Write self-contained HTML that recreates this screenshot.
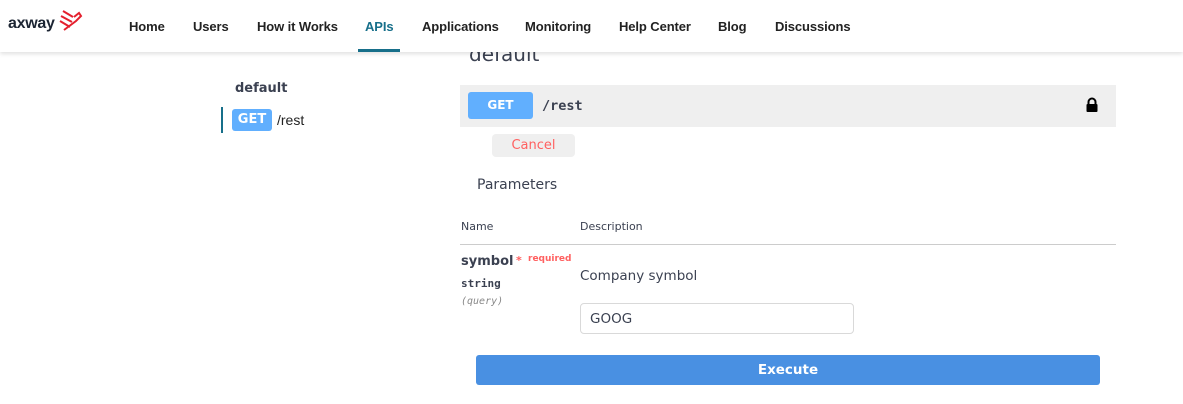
<!DOCTYPE html>
<html><head><meta charset="utf-8"><style>
*{margin:0;padding:0;box-sizing:border-box}
body{width:1183px;height:404px;background:#fff;position:relative;overflow:hidden;font-family:"DejaVu Sans",sans-serif;color:#3b4151}
.a{position:absolute;white-space:nowrap}
.hdr{position:absolute;left:0;top:0;width:1183px;height:52px;background:#fff;box-shadow:0 2px 4px rgba(0,0,0,.12);z-index:2}
.nav{font-family:"Liberation Sans",sans-serif;font-size:13px;font-weight:bold;color:#222;top:19px;letter-spacing:-0.1px}
.mono{font-family:"DejaVu Sans Mono",monospace}
</style></head><body>
<div class="hdr">
  <div class="a" style="left:8px;top:15px;font-family:'Liberation Sans',sans-serif;font-weight:bold;font-size:16px;color:#1c2533;letter-spacing:-0.3px">axway</div>
  <svg class="a" style="left:58px;top:9px" width="25" height="24" viewBox="0 0 25 24" fill="none" stroke="#e4202e" stroke-width="2">
    <path d="M5 2 L15 8"/><path d="M3 7 L14 13"/><path d="M2 12 L12 18"/>
    <path d="M16 8 L21 4 L23 7 L18 12 L6 21"/>
  </svg>
  <div class="a nav" style="left:129px">Home</div>
  <div class="a nav" style="left:193px">Users</div>
  <div class="a nav" style="left:257px">How it Works</div>
  <div class="a nav" style="left:365px;color:#176f8a">APIs</div>
  <div class="a" style="left:358px;top:49px;width:42px;height:3px;background:#176f8a"></div>
  <div class="a nav" style="left:422px">Applications</div>
  <div class="a nav" style="left:525px">Monitoring</div>
  <div class="a nav" style="left:619px">Help Center</div>
  <div class="a nav" style="left:718px">Blog</div>
  <div class="a nav" style="left:775px">Discussions</div>
</div>
<div class="a" style="left:469px;top:42px;font-size:20px;color:#3b4151">default</div>
<div class="a" style="left:235px;top:81px;font-size:13px;font-weight:bold;color:#3b4151">default</div>
<div class="a" style="left:221px;top:107px;width:2px;height:26px;background:#176f8a"></div>
<div class="a" style="left:232px;top:109px;width:40px;height:22px;background:#61affe;border-radius:3px;color:#fff;font-weight:bold;font-size:13px;text-align:center;line-height:22px">GET</div>
<div class="a" style="left:277px;top:112px;font-family:'Liberation Sans',sans-serif;font-size:14px;color:#222">/rest</div>
<div class="a" style="left:460px;top:85px;width:656px;height:42px;background:#efefef"></div>
<div class="a" style="left:468px;top:92px;width:65px;height:27px;background:#61affe;border-radius:3px;color:#fff;font-weight:bold;font-size:12px;text-align:center;line-height:27px">GET</div>
<div class="a mono" style="left:542px;top:98px;font-size:13.5px;font-weight:bold;color:#3b4151">/rest</div>
<svg class="a" style="left:1085px;top:97px" width="14" height="16" viewBox="0 0 14 16"><path d="M3.5 7V5a3.5 3.5 0 0 1 7 0v2" fill="none" stroke="#000" stroke-width="2"/><rect x="1.5" y="7" width="11" height="8" rx="1" fill="#000"/></svg>
<div class="a" style="left:492px;top:134px;width:83px;height:23px;background:#efefef;border-radius:4px;color:#ff6060;font-size:13px;text-align:center;line-height:23px">Cancel</div>
<div class="a" style="left:477px;top:177px;font-size:14px;color:#3b4151">Parameters</div>
<div class="a" style="left:461px;top:220px;font-size:11px;color:#3b4151">Name</div>
<div class="a" style="left:580px;top:220px;font-size:11px;color:#3b4151">Description</div>
<div class="a" style="left:460px;top:244px;width:656px;height:1px;background:#ccc"></div>
<div class="a" style="left:461px;top:254px;font-size:13px;font-weight:bold">symbol</div>
<div class="a" style="left:516px;top:254px;font-size:11px;color:#ff6060;font-weight:bold">*</div>
<div class="a" style="left:528px;top:254px;font-size:9px;color:#ff6060;font-weight:bold">required</div>
<div class="a mono" style="left:461px;top:277px;font-size:11px;font-weight:bold">string</div>
<div class="a mono" style="left:461px;top:296px;font-size:10px;font-style:italic;color:#888">(query)</div>
<div class="a" style="left:580px;top:268px;font-size:13.5px">Company symbol</div>
<div class="a" style="left:580px;top:303px;width:274px;height:31px;border:1px solid #d9d9d9;border-radius:4px;font-size:13.5px;padding-left:9px;line-height:31px;color:#3b4151">GOOG</div>
<div class="a" style="left:476px;top:355px;width:624px;height:30px;background:#4990e2;border-radius:3px;color:#fff;font-weight:bold;font-size:13.5px;text-align:center;line-height:30px">Execute</div>
</body></html>
